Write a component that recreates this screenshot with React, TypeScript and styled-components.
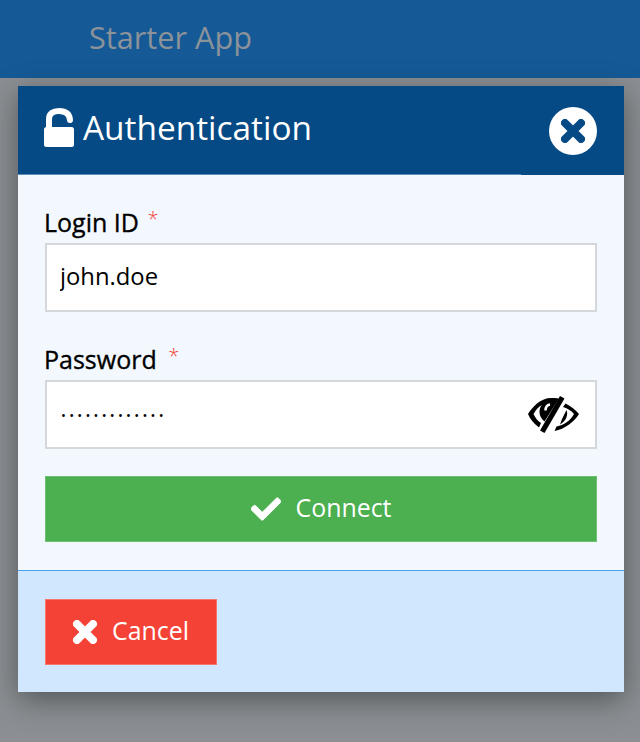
import React from "react";
import styled, { createGlobalStyle } from "styled-components";
import { FaCheck } from "react-icons/fa";

const GlobalStyle = createGlobalStyle`
  html, body {
    margin: 0;
    height: 100%;
    background: #8b8f93;
    font-family: "Open Sans", "Noto Sans", sans-serif;
  }
  * {
    box-sizing: border-box;
  }
`;

function OpenLock() {
  return (
    <svg width="30" height="40" viewBox="0 0 30 40">
      <path d="M5 20V11C5 5.500 9 3 15 3C21.500 3 25.500 5.500 26 12" fill="none" stroke="#fff" strokeWidth="6" strokeLinecap="round" />
      <rect x="0" y="19" width="30" height="20" rx="2.500" fill="#fff" />
    </svg>
  );
}

function Cross({ size, weight }: { size: number; weight: number }) {
  const end = size - weight / 2;
  const start = weight / 2;
  return (
    <svg width={size} height={size} viewBox={`0 0 ${size} ${size}`}>
      <path d={`M${start} ${start}L${end} ${end}M${end} ${start}L${start} ${end}`} stroke="currentColor" strokeWidth={weight} strokeLinecap="round" />
    </svg>
  );
}

function SlashedEye() {
  return (
    <svg width="52" height="40" viewBox="0 0 52 40">
      <path d="M24 3C14 3 6 11 1 19C3 24 7 29 12 32.500L14 28C10.500 26 8.500 23 6.500 19C9 14.500 11.500 12 15 10C13 12 12.500 14 12.500 17C12.500 21 14.500 24 17.500 26.500L32 3.500C29 3 27 3 24 3Z" fill="#000" />
      <path d="M23 9.500C20 10 18.500 12.500 18.500 15.500" fill="none" stroke="#fff" strokeWidth="2.500" />
      <path d="M33 1L37.500 3.500L17.500 38L13 35.500Z" fill="#000" />
      <path d="M38.500 8.500C44 11 48.500 15 52 19C47 27 38 34 27.500 36L29.500 31.500C37 30 43 26 47 19C44.500 16 41 13.500 36 12Z" fill="#000" />
      <path d="M39.500 15C41.500 20 39 26 33 29.500L35 24Z" fill="#000" />
    </svg>
  );
}

function App() {
  return (
    <>
      <GlobalStyle />
      <AppBar>Starter App</AppBar>
      <Modal>
        <ModalHeader>
          <Title>
            <OpenLock />
            <TitleText>Authentication</TitleText>
          </Title>
          <CloseButton>
            <Cross size={24} weight={8} />
          </CloseButton>
        </ModalHeader>
        <ModalBody>
          <Field>
            <Label>
              Login ID <Required $gap={2}>*</Required>
            </Label>
            <InputBox>
              <Input defaultValue="john.doe" />
            </InputBox>
          </Field>
          <Field>
            <Label>
              Password <Required $gap={5}>*</Required>
            </Label>
            <InputBox>
              <PasswordInput type="password" defaultValue="mypassword123" />
              <SlashedEye />
            </InputBox>
          </Field>
          <ConnectRow>
            <Button $color="#4caf50" $edge="#6fbf73" $wide>
              <FaCheck size={30} stroke="currentColor" strokeWidth={15} />
              <ButtonText>Connect</ButtonText>
            </Button>
          </ConnectRow>
        </ModalBody>
        <ModalFooter>
          <Button $color="#f44336" $edge="#f7766c">
            <Cross size={24} weight={8} />
            <ButtonText>Cancel</ButtonText>
          </Button>
        </ModalFooter>
      </Modal>
    </>
  );
}

export default App;

const AppBar = styled.header`
  height: 78px;
  padding-left: 89px;
  background: #155a96;
  color: #8b9299;
  font-size: 30.7px;
  line-height: 74px;
`;

const Modal = styled.section`
  width: 606px;
  height: 606px;
  margin: 8px 0 0 18px;
  display: flex;
  flex-direction: column;
  box-shadow: 0 8px 28px rgba(0, 0, 0, 0.4);
`;

const ModalHeader = styled.div`
  position: relative;
  height: 89px;
  padding: 0 27px 0 26px;
  display: flex;
  align-items: center;
  justify-content: space-between;
  background: #054a84;
  color: #fff;

  /* hairline that stops short of the close button */
  &::after {
    content: "";
    position: absolute;
    left: 0;
    bottom: 0;
    width: 503px;
    height: 1px;
    background: #5f8fb8;
  }
`;

const Title = styled.h2`
  margin: 0 0 6px;
  display: flex;
  align-items: center;
  gap: 9px;
  font-size: 33.4px;
  font-weight: 400;
`;

const TitleText = styled.span`
  margin-bottom: 2px;
  line-height: 40px;
`;

const CloseButton = styled.span`
  width: 48px;
  height: 48px;
  display: flex;
  align-items: center;
  justify-content: center;
  border-radius: 50%;
  background: #fff;
  color: #054a84;
`;

const ModalBody = styled.div`
  height: 395px;
  padding: 32px 27px 0;
  display: flex;
  flex-direction: column;
  background: #f3f8ff;
`;

const Field = styled.div`
  & + & {
    margin-top: 32px;
  }
`;

const Label = styled.label`
  display: block;
  height: 36px;
  margin-left: -1px;
  font-size: 25px;
  font-weight: 400;
  line-height: 30px;
  color: #000;
  -webkit-text-stroke: 0.35px #000;
`;

const Required = styled.sup<{ $gap: number }>`
  margin-left: ${(p) => p.$gap}px;
  font-size: 20px;
  font-weight: 300;
  line-height: 0;
  position: relative;
  top: 3px;
  color: #f44336;
  -webkit-text-stroke: 0;
`;

const InputBox = styled.div`
  height: 69px;
  padding: 0 16px 0 14px;
  display: flex;
  align-items: center;
  background: #fff;
  border: 2px solid #d5d8da;
`;

const Input = styled.input`
  flex: 1;
  min-width: 0;
  margin-left: -1px;
  padding: 0 0 4px;
  border: 0;
  outline: 0;
  background: transparent;
  font: 400 23.8px "Open Sans", "Noto Sans", sans-serif;
  color: #000;
`;

const PasswordInput = styled(Input)`
  margin-left: 0;
  padding: 0;
  font-size: 13px;
  letter-spacing: 3.25px;
`;

const ConnectRow = styled.div`
  margin-top: 27px;
`;

const Button = styled.div<{ $color: string; $edge: string; $wide?: boolean }>`
  width: ${(p) => (p.$wide ? "100%" : "172px")};
  height: 66px;
  display: flex;
  align-items: center;
  justify-content: center;
  gap: 15px;
  background: ${(p) => p.$color};
  border: 1px solid ${(p) => p.$edge};
  color: #fff;
  font-size: 24.9px;
`;

const ButtonText = styled.span`
  margin-bottom: 5px;
`;

const ModalFooter = styled.div`
  flex: 1;
  padding: 28px 27px 0;
  background: #d0e7fe;
  border-top: 1px solid #4aa3ef;
`;
